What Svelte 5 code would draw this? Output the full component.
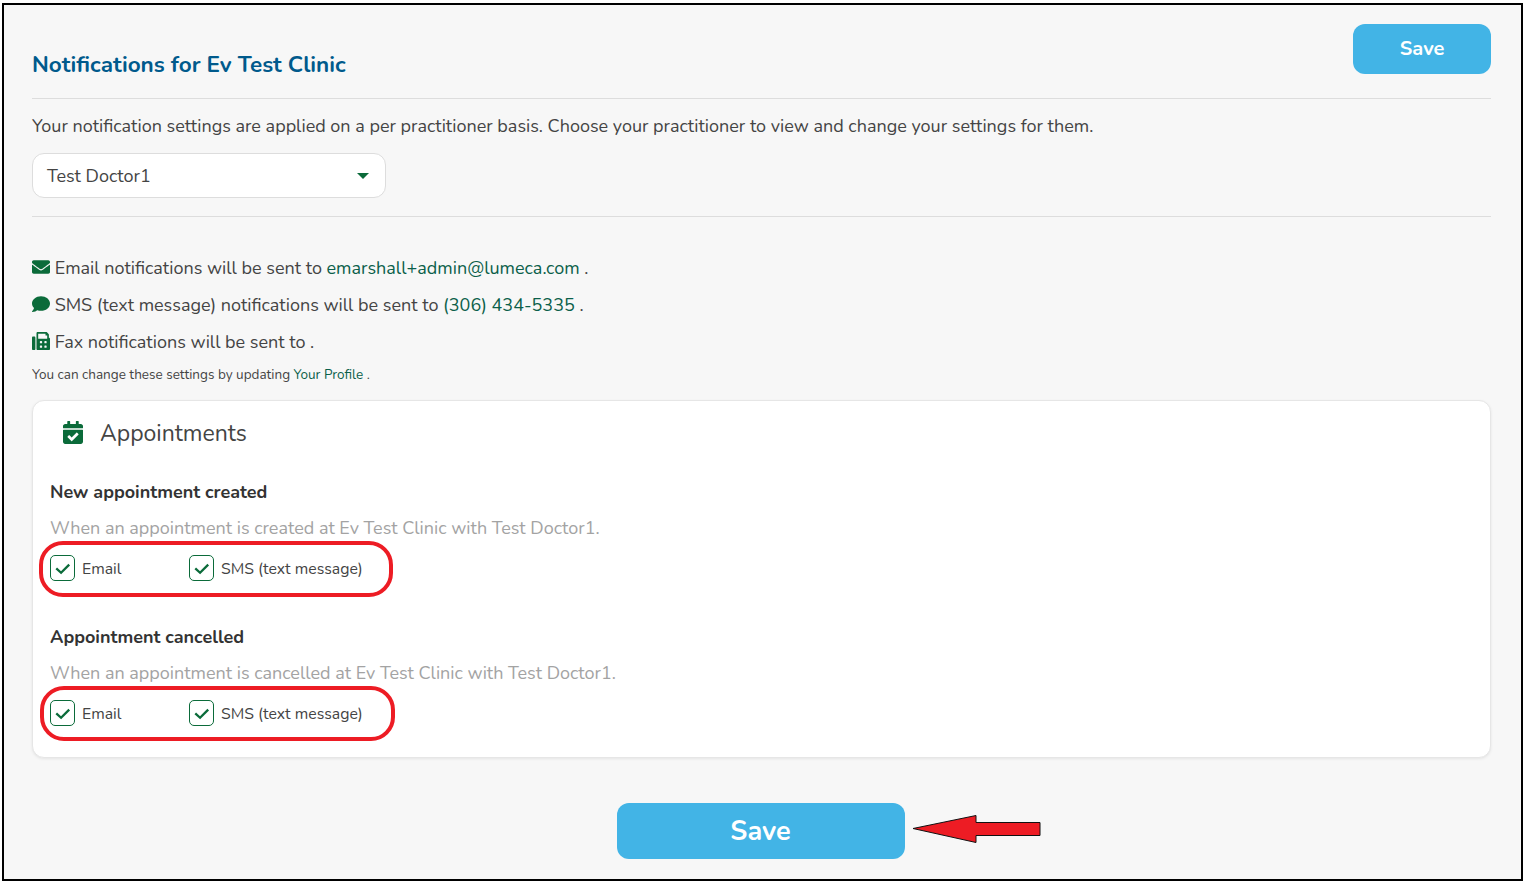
<script>
  const groups = [
    { title: 'New appointment created', desc: 'When an appointment is created at Ev Test Clinic with Test Doctor1.', ring: 'ring-a' },
    { title: 'Appointment cancelled', desc: 'When an appointment is cancelled at Ev Test Clinic with Test Doctor1.', ring: 'ring-b' }
  ]
</script>

<div class="frame">
  <div class="head">
    <h1>Notifications for Ev Test Clinic</h1>
    <button class="btn small">Save</button>
  </div>

  <p class="intro">Your notification settings are applied on a per practitioner basis. Choose your practitioner to view and change your settings for them.</p>

  <div class="select">
    <span>Test Doctor1</span>
    <i class="caret"></i>
  </div>

  <div class="contact">
    <p>
      <svg class="ico" viewBox="0 0 512 512"><path d="M502 191c4-3 10 0 10 5v204c0 26-22 48-48 48H48c-26 0-48-22-48-48V196c0-5 6-8 10-5 22 17 52 39 154 113 21 15 57 48 92 48 36 0 72-33 92-48 102-74 132-96 154-113zM256 320c23 0 57-29 74-41 133-97 143-105 174-129 6-5 8-11 8-19v-19c0-26-22-48-48-48H48C22 64 0 86 0 112v19c0 8 2 14 8 19 31 24 41 32 174 129 17 12 51 41 74 41z"/></svg>
      Email notifications will be sent to <span class="link">emarshall+admin@lumeca.com</span> .
    </p>
    <p>
      <svg class="ico" viewBox="0 0 512 512"><path d="M256 32C115 32 0 125 0 240c0 50 22 95 58 131-13 51-55 96-56 97-2 2-3 6-1 9 1 3 4 5 7 5 66 0 116-32 142-51 32 12 68 19 106 19 141 0 256-93 256-210S397 32 256 32z"/></svg>
      SMS (text message) notifications will be sent to <span class="link">(306) 434-5335</span> .
    </p>
    <p class="last">
      <svg class="ico" viewBox="0 0 512 512"><path d="M64 128H32c-18 0-32 14-32 32v320c0 18 14 32 32 32h32c18 0 32-14 32-32V160c0-18-14-32-32-32zm416 32V77c0-9-3-17-9-23l-45-45c-6-6-14-9-23-9H160c-18 0-32 14-32 32v448c0 18 14 32 32 32h320c18 0 32-14 32-32V192c0-18-14-32-32-32zM288 432c0 9-7 16-16 16h-32c-9 0-16-7-16-16v-32c0-9 7-16 16-16h32c9 0 16 7 16 16zm0-128c0 9-7 16-16 16h-32c-9 0-16-7-16-16v-32c0-9 7-16 16-16h32c9 0 16 7 16 16zm128 128c0 9-7 16-16 16h-32c-9 0-16-7-16-16v-32c0-9 7-16 16-16h32c9 0 16 7 16 16zm0-128c0 9-7 16-16 16h-32c-9 0-16-7-16-16v-32c0-9 7-16 16-16h32c9 0 16 7 16 16zm16-112H176V48h208v48h48z"/></svg>
      Fax notifications will be sent to .
    </p>
    <small>You can change these settings by updating <span class="link">Your Profile</span> .</small>
  </div>

  <section class="card">
    <div class="card-title">
      <svg class="cal" viewBox="0 0 448 512"><path d="M436 160H12c-7 0-12-5-12-12v-36c0-26 22-48 48-48h48V12c0-7 5-12 12-12h40c7 0 12 5 12 12v52h128V12c0-7 5-12 12-12h40c7 0 12 5 12 12v52h48c26 0 48 22 48 48v36c0 7-5 12-12 12zM12 192h424c7 0 12 5 12 12v260c0 26-22 48-48 48H48c-26 0-48-22-48-48V204c0-7 5-12 12-12zm333 96-28-28c-5-5-12-5-17 0L194 366l-46-46c-5-5-12-5-17 0l-28 28c-5 5-5 12 0 17l83 83c5 5 12 5 17 0l142-143c5-5 5-12 0-17z"/></svg>
      <h2>Appointments</h2>
    </div>

    {#each groups as g}
      <div class="group">
        <h3>{g.title}</h3>
        <p class="desc">{g.desc}</p>
        <div class="checks">
          <label class="check">
            <span class="box"><svg viewBox="0 0 24 24"><path d="M5.500 13l5 4.500 8.500-8.500"/></svg></span>
            <span class="lbl">Email</span>
          </label>
          <label class="check">
            <span class="box"><svg viewBox="0 0 24 24"><path d="M5.500 13l5 4.500 8.500-8.500"/></svg></span>
            <span class="lbl">SMS (text message)</span>
          </label>
          <span class="ring {g.ring}"></span>
        </div>
      </div>
    {/each}
  </section>

  <div class="foot">
    <button class="btn big">Save</button>
    <svg class="arrow" width="132" height="28" viewBox="0 0 132 28"><path d="M2 13.500 65 .5v7h64v13H65v7z" fill="#ed1c24" stroke="#111" stroke-width="1"/></svg>
  </div>
</div>

<style>
  :global(body) {
    background: #fff;
  }

  .frame {
    box-sizing: border-box;
    width: 1521px;
    height: 878px;
    margin: 3px 0 0 2px;
    padding: 0 30px 0 28px;
    border: 2px solid #000;
    background: #f7f7f7;
    font-family: "Nunito", "Noto Sans", sans-serif;
    font-size: 18px;
    color: #444;
  }

  p {
    margin: 0;
  }

  .head {
    display: flex;
    justify-content: space-between;
    align-items: flex-end;
    height: 93px;
    border-bottom: 1px solid #ddd;
  }

  h1 {
    margin: 0 0 18px;
    font-size: 22.5px;
    line-height: 30px;
    font-weight: 700;
    color: #005a8c;
  }

  .btn {
    border: 0;
    color: #fff;
    background: #42b4e6;
    font-family: inherit;
    font-weight: 700;
    padding: 0;
  }

  .btn.small {
    width: 138px;
    height: 50px;
    margin-bottom: 24px;
    padding-bottom: 2px;
    border-radius: 12px;
    font-size: 20px;
  }

  .btn.big {
    width: 288px;
    height: 56px;
    border-radius: 12px;
    font-size: 27px;
  }

  .intro {
    margin-top: 15px;
    line-height: 24px;
    white-space: nowrap;
  }

  .select {
    box-sizing: border-box;
    display: flex;
    justify-content: space-between;
    align-items: center;
    width: 354px;
    height: 45px;
    margin-top: 15px;
    padding: 0 16px 0 14px;
    background: #fff;
    border: 1px solid #ddd;
    border-radius: 12px;
  }

  .caret {
    border: 6px solid transparent;
    border-top-color: #0b6b3a;
    border-bottom: 0;
  }

  .contact {
    margin-top: 18px;
    padding-top: 39px;
    border-top: 1px solid #ddd;
  }

  .contact p {
    line-height: 24px;
    margin-bottom: 13px;
    white-space: nowrap;
  }

  .contact p.last {
    margin-bottom: 12px;
  }

  .ico {
    width: 18px;
    height: 18px;
    fill: #0b6b3a;
    vertical-align: -2px;
  }

  .link {
    color: #0b5f4a;
  }

  small {
    display: block;
    font-size: 13.5px;
    line-height: 18px;
  }

  .card {
    box-sizing: border-box;
    height: 358px;
    margin-top: 16px;
    padding: 0 17px;
    background: #fff;
    border: 1px solid #e6e6e6;
    border-radius: 12px;
    box-shadow: 0 1px 3px rgba(0, 0, 0, .08);
  }

  .card-title {
    display: flex;
    align-items: center;
    gap: 17px;
    height: 64px;
    padding-left: 13px;
  }

  .cal {
    width: 20px;
    height: 23px;
    margin-bottom: 2px;
    fill: #0b6b3a;
  }

  h2 {
    margin: 0;
    font-size: 23px;
    font-weight: 400;
  }

  .group {
    padding-top: 14px;
    height: 131px;
  }

  h3 {
    margin: 0;
    font-size: 18px;
    line-height: 26px;
    font-weight: 700;
    color: #333;
  }

  .desc {
    margin-top: 11px;
    line-height: 24px;
    color: #a3a3a3;
  }

  .checks {
    position: relative;
    display: flex;
    margin-top: 15px;
  }

  .check {
    display: flex;
    align-items: center;
    gap: 7px;
    width: 139px;
    height: 26px;
    font-size: 15.8px;
    white-space: nowrap;
  }

  .lbl {
    padding-top: 2px;
  }

  .box {
    box-sizing: border-box;
    flex: none;
    width: 25px;
    height: 26px;
    border: 1px solid #0b6b3a;
    border-radius: 5px;
  }

  .box svg {
    display: block;
    fill: none;
    stroke: #0b6b3a;
    stroke-width: 2.400;
  }

  .ring {
    position: absolute;
    left: -11px;
    top: -14px;
    width: 354px;
    height: 56px;
    box-sizing: border-box;
    border: 4px solid #ed1c24;
    border-radius: 24px;
  }

  .ring-b {
    left: -10px;
    width: 355px;
    height: 55px;
  }

  .foot {
    position: relative;
    display: flex;
    justify-content: center;
    margin-top: 45px;
    padding-right: 2px;
  }

  .arrow {
    position: absolute;
    left: 879px;
    top: 12px;
  }
</style>
